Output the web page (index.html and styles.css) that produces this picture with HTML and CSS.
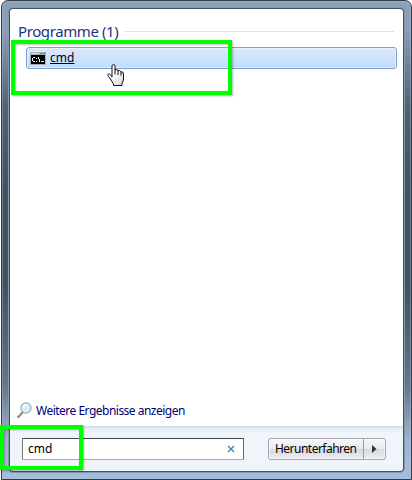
FILE: index.html
```html
<!DOCTYPE html>
<html lang="de">
<head>
<meta charset="utf-8">
<title>Startmenü</title>
<link rel="stylesheet" href="styles.css">
</head>
<body>
<div class="frame">
  <div class="panel">
    <main class="results">
      <div class="heading"><h1>Programme (1)</h1><span class="rule"></span></div>
      <div class="result">
        <svg class="console" width="16" height="13" viewBox="0 0 16 13" shape-rendering="crispEdges">
          <path fill="#a6adb6" d="M0 0h16v13H0z"/>
          <path fill="#d8e0e8" d="M1 1h8v1H1z"/>
          <path fill="#456a9b" d="M10 1h1v1h-1zM12 1h1v1h-1zM14 1h1v1h-1z"/>
          <path fill="#000" d="M1 3h14v9H1z"/>
          <path fill="#fff" d="M3 5h2v1H3zM2 6h1v3H2zM3 9h2v1H3zM6 6h1v1H6zM6 9h1v1H6zM8 5h1v2H8zM9 7h1v3H9zM11 9h3v1h-3z"/>
        </svg>
        <span class="name">cmd</span>
      </div>
    </main>
    <div class="more">
      <svg width="16" height="17" viewBox="0 0 16 17">
        <path d="M5.500 10.500L1.200 15" stroke="#77736f" stroke-width="2" stroke-linecap="round"/>
        <path d="M5 10.600L1.200 14.400" stroke="#c9c4bd" stroke-width=".8"/>
        <circle cx="9" cy="6" r="5.100" fill="#d7effd" stroke="#a1abb5" stroke-width="1.200"/>
        <path d="M5.400 6.500a3.700 3.700 0 0 1 5-4.100Q7 4 5.400 6.500z" fill="#fff"/>
      </svg>
      <span>Weitere Ergebnisse anzeigen</span>
    </div>
    <footer class="bar">
      <div class="search"><span>cmd</span>
        <svg width="8" height="8" viewBox="0 0 8 8"><path d="M1 1l6 6M7 1L1 7" stroke="#4482b4" stroke-width="1.400"/></svg>
      </div>
      <div class="power">
        <span class="shutdown">Herunterfahren</span>
        <span class="arrow"><svg width="5" height="8" viewBox="0 0 5 8"><path d="M0 0l4.500 4L0 8z" fill="#303238"/></svg></span>
      </div>
    </footer>
  </div>
</div>
<div class="mark mark-result"></div>
<div class="mark mark-search"></div>
<svg class="hand" width="18" height="23" viewBox="0 0 18 23">
  <defs><linearGradient id="glove" x1="0" y1="0" x2="1" y2="1"><stop offset=".4" stop-color="#fff"/><stop offset="1" stop-color="#d4d4d4"/></linearGradient></defs>
  <path d="M5 13V2Q5 .6 6.500 .6T8 2v4Q10 4.800 11 6.600 13 5.600 14 7.800 16.500 7.400 16.500 10v5q0 2-1.500 4v2.500H6.500V20Q4.700 17.500 3.500 15 1.300 12.500 .8 11.300 .8 9.600 2.500 10 4 10.800 5 13z" fill="url(#glove)" stroke="#10101c" stroke-linejoin="round"/>
  <path d="M8 5v5.500M11 6.500v4.500M14 7.800v3.700" stroke="#10101c"/>
</svg>
</body>
</html>
```
FILE: styles.css
```css
* { box-sizing: border-box; }
body {
  margin: 0;
  width: 412px;
  height: 480px;
  overflow: hidden;
  position: relative;
  background: #fff;
  font: 12px/16px "Noto Sans", "Open Sans", sans-serif;
  color: #000;
}
svg { display: block; fill: none; flex: none; }
.frame {
  margin-left: 1px;
  width: 411px;
  height: 480px;
  padding: 6px;
  border: 1px solid #353a47;
  border-radius: 7px 7px 0 0;
  background: linear-gradient(#8da0ba 0, #8c9fb8 28px, #526273 105px, #435161 190px, #435161 285px, #65778b 385px, #9eb5d0 440px, #a5bedc 100%);
  box-shadow: inset 0 0 0 1px rgba(170, 195, 220, .4);
}
.panel {
  display: flex;
  flex-direction: column;
  height: 466px;
  padding: 1px;
  border: 1px solid #8298ad;
  border-radius: 5px;
  background: #445161;
}
.results { flex: 1; padding: 13px 6px 0 8px; background: #fff; border-radius: 3px 3px 0 0; }
.heading { display: flex; align-items: center; height: 18px; padding-right: 3px; }
.heading h1 {
  margin: 0;
  width: 107px;
  font-size: 15px;
  line-height: 18px;
  font-weight: 400;
  letter-spacing: -.4px;
  color: #1e3287;
  white-space: nowrap;
}
.rule { flex: 1; height: 1px; background: #e0e1e2; }
.result {
  display: flex;
  align-items: center;
  height: 22px;
  margin: 7px 0 0 8px;
  padding-left: 3px;
  border: 1px solid #7da2ce;
  border-radius: 3px;
  background: linear-gradient(#dce9fc, #c1dcfc);
  box-shadow: inset 0 0 0 1px rgba(255, 255, 255, .4);
}
.name { margin-left: 4px; text-decoration: underline; text-decoration-thickness: 1px; text-underline-offset: 1px; }
.more { display: flex; align-items: center; height: 24px; padding: 0 0 7px 7px; color: #000078; background: #fff; }
.more span { margin-left: 3px; white-space: nowrap; letter-spacing: -.51px; }
.bar {
  display: flex;
  align-items: flex-start;
  height: 45px;
  padding: 12px 0 0 12px;
  background: linear-gradient(#c9d8e8 0, #d9e3f0 1px, #e8eef7 3px, #f0f4fb 7px);
  border-radius: 0 0 3px 3px;
}
.search {
  display: flex;
  align-items: center;
  justify-content: space-between;
  width: 222px;
  height: 22px;
  padding: 0 8px 0 5px;
  border: 1px solid #a8aaad;
  border-top-color: #42444a;
  border-left-color: #77797d;
  border-right-color: #65676c;
  border-radius: 1px;
  background: #fff;
}
.power {
  display: flex;
  width: 118px;
  height: 22px;
  margin-left: 24px;
  border: 1px solid #a2a4a8;
  border-radius: 3px;
  background: linear-gradient(#f5f6f8 0, #e9ebee 48%, #d5d8dd 52%, #eceef2 100%);
  box-shadow: inset 0 0 0 1px rgba(255, 255, 255, .6);
}
.shutdown { width: 95px; padding-left: 6px; line-height: 20px; letter-spacing: -.52px; border-right: 1px solid #9c9ea2; white-space: nowrap; }
.arrow { flex: 1; display: flex; align-items: center; justify-content: center; }
.mark { position: absolute; border: 4px solid #0f0; box-shadow: 1px 1px 2px rgba(0, 0, 0, .3), inset 1px 1px 2px rgba(0, 0, 0, .25); }
.mark-result { left: 11px; top: 40px; width: 221px; height: 55px; }
.mark-search { left: 0; top: 425px; width: 83px; height: 45px; }
.hand { position: absolute; left: 107px; top: 64px; }
```
